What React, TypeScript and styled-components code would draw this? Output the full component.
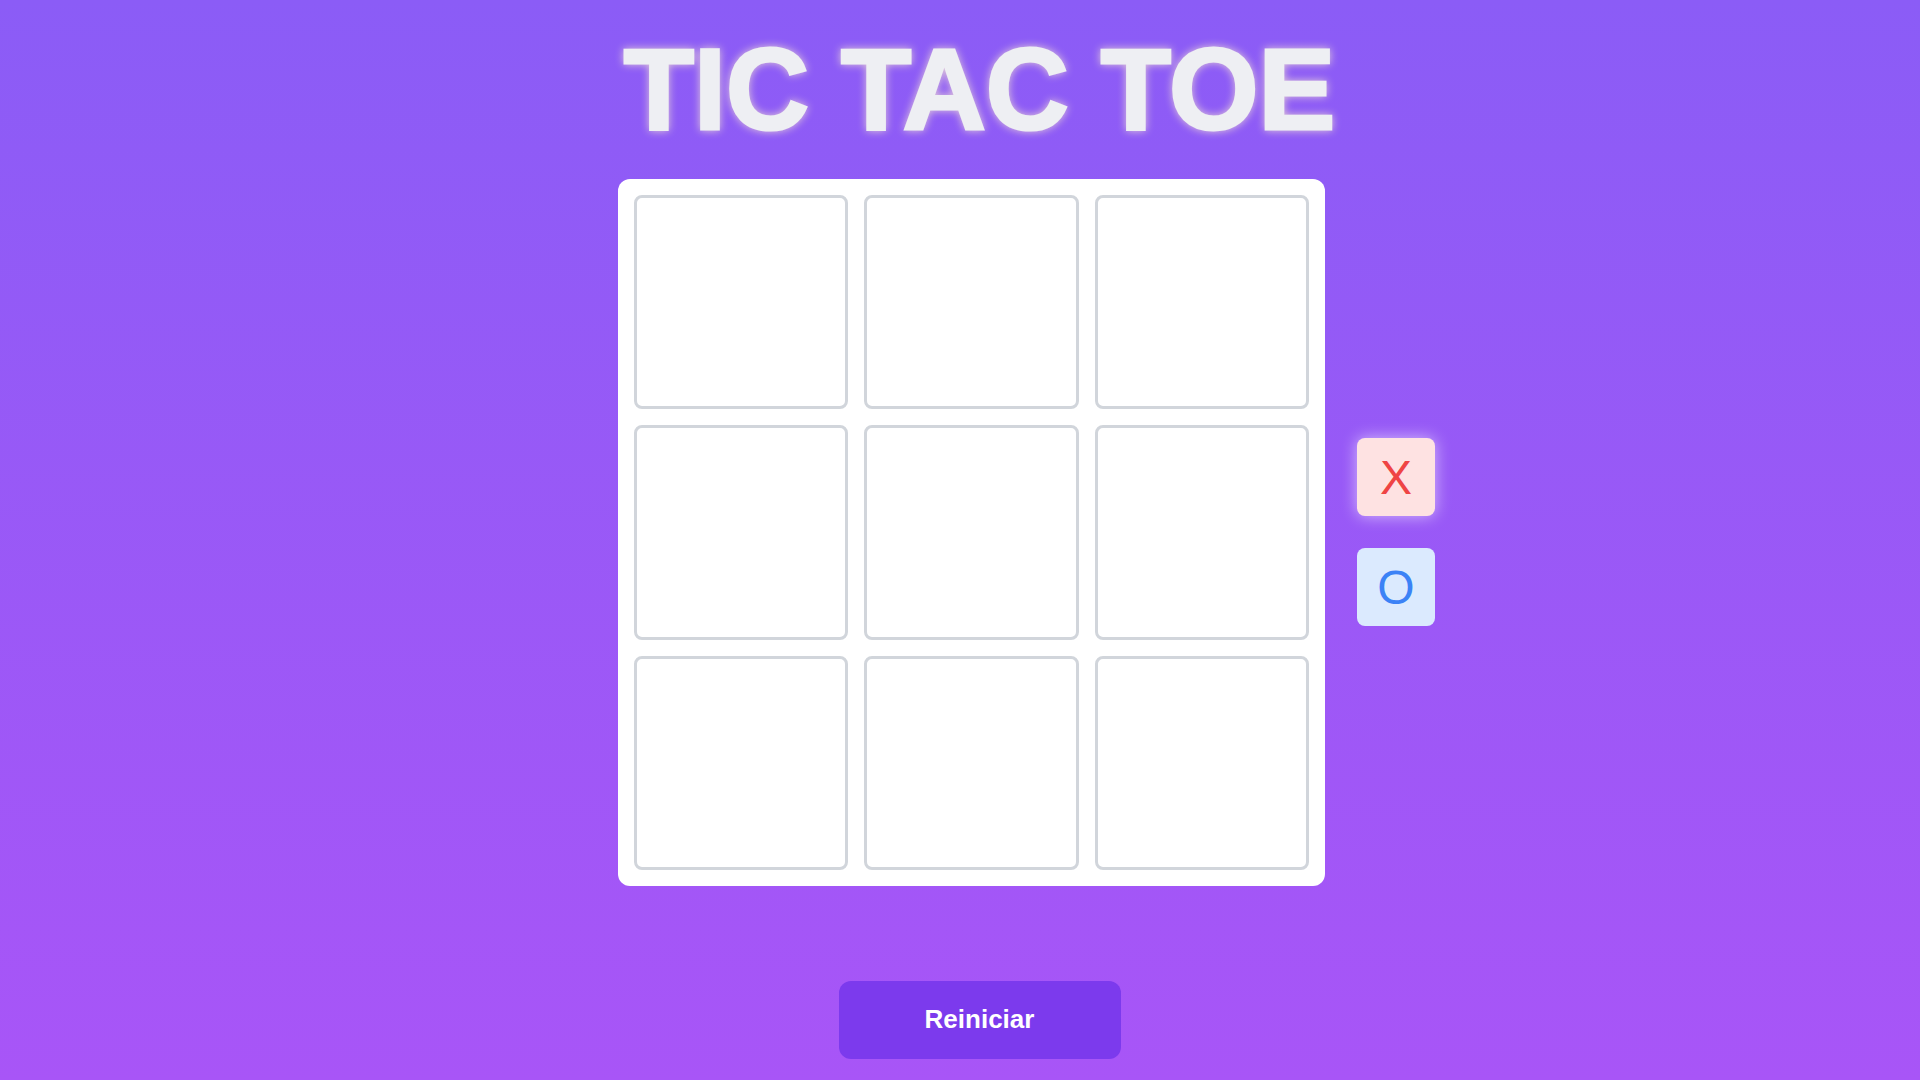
import React, { useState } from 'react'
import styled, { createGlobalStyle, css } from 'styled-components'

type Player = 'X' | 'O'
type Cell = Player | null

const GlobalStyle = createGlobalStyle`
  html, body {
    margin: 0;
    padding: 0;
  }

  body {
    font-family: 'Liberation Sans', Arial, Helvetica, sans-serif;
    background: linear-gradient(180deg, #8b5cf6 0%, #a855f7 100%);
    min-height: 100vh;
  }
`

const lines = [
  [0, 1, 2],
  [3, 4, 5],
  [6, 7, 8],
  [0, 3, 6],
  [1, 4, 7],
  [2, 5, 8],
  [0, 4, 8],
  [2, 4, 6]
]

const getWinner = (cells: Cell[]): Player | null => {
  for (const [a, b, c] of lines) {
    if (cells[a] && cells[a] === cells[b] && cells[a] === cells[c]) return cells[a]
  }
  return null
}

const App = () => {
  const [cells, setCells] = useState<Cell[]>(Array(9).fill(null))
  const [turn, setTurn] = useState<Player>('X')

  const winner = getWinner(cells)

  const play = (index: number) => {
    if (cells[index] || winner) return
    const next = [...cells]
    next[index] = turn
    setCells(next)
    setTurn(turn === 'X' ? 'O' : 'X')
  }

  const reset = () => {
    setCells(Array(9).fill(null))
    setTurn('X')
  }

  return (
    <>
      <GlobalStyle />
      <Page>
        <Title>TIC TAC TOE</Title>
        <GameRow>
          <Board>
            {cells.map((cell, index) => (
              <Square key={index} $mark={cell} onClick={() => play(index)}>
                {cell}
              </Square>
            ))}
          </Board>
          <TurnColumn>
            <TurnBadge $player="X" $active={turn === 'X'}>
              X
            </TurnBadge>
            <TurnBadge $player="O" $active={turn === 'O'}>
              O
            </TurnBadge>
          </TurnColumn>
        </GameRow>
        <ResetButton onClick={reset}>Reiniciar</ResetButton>
      </Page>
    </>
  )
}

const Page = styled.main`
  display: flex;
  flex-direction: column;
  align-items: center;
  padding: 32px 0 0 39px;
  box-sizing: border-box;
  min-height: 100vh;
`

const Title = styled.h1`
  margin: 0 0 32px;
  font-size: 115px;
  line-height: 1;
  font-weight: 700;
  color: #eeeff3;
  -webkit-text-stroke: 3px #eeeff3;
  filter: drop-shadow(0 0 4px rgba(255, 240, 205, 0.75));
`

const GameRow = styled.div`
  display: grid;
  grid-template-columns: 1fr auto 1fr;
  align-items: center;
  column-gap: 32px;
  width: calc(100% + 16px);
  margin-left: -16px;
`

const Board = styled.div`
  grid-column: 2;
  display: grid;
  grid-template-columns: repeat(3, 1fr);
  gap: 16px;
  width: 707px;
  box-sizing: border-box;
  padding: 16px;
  background: #ffffff;
  border-radius: 12px;
`

const Square = styled.button<{ $mark: Cell }>`
  aspect-ratio: 1 / 1;
  box-sizing: border-box;
  border: 3px solid #d1d5db;
  border-radius: 8px;
  background: #ffffff;
  font-family: inherit;
  font-size: 120px;
  cursor: pointer;
  padding: 0;
  color: ${({ $mark }) => ($mark === 'X' ? '#ef4444' : '#3b82f6')};
`

const TurnColumn = styled.div`
  grid-column: 3;
  justify-self: start;
  display: flex;
  flex-direction: column;
  gap: 32px;
`

const TurnBadge = styled.div<{ $player: Player; $active: boolean }>`
  width: 78px;
  height: 78px;
  border-radius: 8px;
  display: flex;
  align-items: center;
  justify-content: center;
  font-size: 48px;
  ${({ $player }) =>
    $player === 'X'
      ? css`
          background: #fee2e2;
          color: #ef4444;
        `
      : css`
          background: #dbeafe;
          color: #3b82f6;
        `}
  ${({ $active }) =>
    $active &&
    css`
      box-shadow: 0 0 16px rgba(255, 255, 255, 0.6);
    `}
`

const ResetButton = styled.button`
  margin-top: 95px;
  width: 282px;
  height: 78px;
  border: none;
  border-radius: 12px;
  background: #7c3aed;
  color: #ffffff;
  font-family: inherit;
  font-size: 26px;
  font-weight: 700;
  cursor: pointer;
`

export default App
